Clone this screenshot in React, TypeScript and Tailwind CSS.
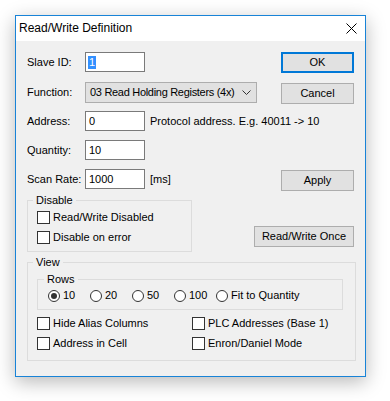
import React from "react";

function CheckBox({ label }: { label: string }) {
  return (
    <div className="flex items-center h-[13px]">
      <span className="w-[13px] h-[13px] border border-[#333333] bg-white shrink-0" />
      <span className="ml-[3px] leading-[13px] whitespace-nowrap">{label}</span>
    </div>
  );
}

function Radio({ label, checked }: { label: string; checked?: boolean }) {
  return (
    <div className="flex items-center h-[13px] w-[42px] shrink-0">
      <span className="w-[12px] h-[12px] rounded-full border border-[#333333] bg-white shrink-0 flex items-center justify-center">
        {checked && <span className="w-[6px] h-[6px] rounded-full bg-[#333333]" />}
      </span>
      <span className="ml-[3px] leading-[13px] whitespace-nowrap">{label}</span>
    </div>
  );
}

function Button({ label, primary, className }: { label: string; primary?: boolean; className?: string }) {
  return (
    <button
      className={
        "h-[21px] bg-[#e1e1e1] flex items-center justify-center shrink-0 " +
        (primary ? "border-2 border-[#0078d7] " : "border border-[#adadad] ") +
        (className || "")
      }
    >
      {label}
    </button>
  );
}

function Field({ value, selected }: { value: string; selected?: boolean }) {
  return (
    <div className="w-[60px] h-[20px] border border-[#7a7a7a] bg-white flex items-center pl-[2px] shrink-0">
      {selected ? (
        <span className="bg-[#3390ff] text-white px-[1px] leading-[13px]">{value}</span>
      ) : (
        <span className="pl-[1px]">{value}</span>
      )}
    </div>
  );
}

export default function App() {
  return (
    <div className="w-[390px] h-[401px] bg-white pt-[15px] pl-[15px] font-['Liberation_Sans',Arial,sans-serif] text-[11px] text-black">
      <div className="w-[351px] h-[362px] border border-[#1883d7] bg-[#f0f0f0] flex flex-col shadow-[0_5px_18px_rgba(0,0,0,0.28)]">
        {/* title bar */}
        <div className="h-[25px] bg-white flex items-center justify-between pl-[3px] pr-[8px] shrink-0">
          <span className="text-[12px] pb-[1px]">Read/Write Definition</span>
          <svg width="11" height="11" viewBox="0 0 11 11" className="mb-[1px]">
            <path d="M0.5 0.5 L10.5 10.5 M10.5 0.5 L0.5 10.5" stroke="#000" strokeWidth="1" />
          </svg>
        </div>

        <div className="flex flex-col px-[11px] pt-[11px]">
          <div className="flex items-start h-[30px]">
            <span className="w-[58px] leading-[20px]">Slave ID:</span>
            <Field value="1" selected />
            <Button label="OK" primary className="ml-auto w-[73px]" />
          </div>

          <div className="flex items-start h-[29px]">
            <span className="w-[58px] leading-[21px]">Function:</span>
            <div className="w-[172px] h-[21px] border border-[#adadad] bg-[#e1e1e1] flex items-center justify-between pl-[4px] pr-[5px]">
              <span className="whitespace-nowrap tracking-[-0.3px]">03 Read Holding Registers (4x)</span>
              <svg width="9" height="5" viewBox="0 0 9 5" className="shrink-0">
                <path d="M0.5 0.5 L4.5 4.5 L8.5 0.5" stroke="#333" strokeWidth="1" fill="none" />
              </svg>
            </div>
            <Button label="Cancel" className="ml-auto mt-[1px] w-[73px]" />
          </div>

          <div className="flex items-start h-[29px]">
            <span className="w-[58px] leading-[20px]">Address:</span>
            <Field value="0" />
            <span className="ml-[5px] leading-[20px] whitespace-nowrap">Protocol address. E.g. 40011 -&gt; 10</span>
          </div>

          <div className="flex items-start h-[29px]">
            <span className="w-[58px] leading-[20px]">Quantity:</span>
            <Field value="10" />
          </div>

          <div className="flex items-start h-[25px]">
            <span className="w-[58px] leading-[20px] whitespace-nowrap">Scan Rate:</span>
            <Field value="1000" />
            <span className="ml-[5px] leading-[20px]">[ms]</span>
            <Button label="Apply" className="ml-auto mt-[1px] w-[73px]" />
          </div>

          <div className="flex items-start">
            <fieldset className="w-[165px] border border-[#dcdcdc] pl-[9px] pt-[4px] pb-[7px] flex flex-col gap-[7px]">
              <legend className="ml-[-4px] px-[3px] leading-[13px]">Disable</legend>
              <CheckBox label="Read/Write Disabled" />
              <CheckBox label="Disable on error" />
            </fieldset>
            <Button label="Read/Write Once" className="ml-auto mt-[32px] w-[100px]" />
          </div>

          <fieldset className="w-[329px] mt-[4px] border border-[#dcdcdc] pl-[9px] pb-[10px] flex flex-col">
            <legend className="ml-[-4px] px-[3px] leading-[13px]">View</legend>
            <fieldset className="w-[306px] mt-[4px] border border-[#dcdcdc] pl-[10px] pt-[3px] pb-[7px] flex">
              <legend className="ml-[-4px] px-[3px] leading-[13px]">Rows</legend>
              <Radio label="10" checked />
              <Radio label="20" />
              <Radio label="50" />
              <Radio label="100" />
              <Radio label="Fit to Quantity" />
            </fieldset>
            <div className="grid grid-cols-[155px_1fr] gap-y-[7px] mt-[7px]">
              <CheckBox label="Hide Alias Columns" />
              <CheckBox label="PLC Addresses (Base 1)" />
              <CheckBox label="Address in Cell" />
              <CheckBox label="Enron/Daniel Mode" />
            </div>
          </fieldset>
        </div>
      </div>
    </div>
  );
}
